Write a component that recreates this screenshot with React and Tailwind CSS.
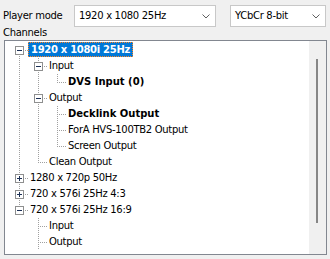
import React from "react";

const LINE = "#a0a0a0";

function Gutter({ up, down, horiz, box }) {
  let v = null;
  if (up && down) v = [0, 16];
  else if (up) v = [0, 9];
  else if (down) v = [8, 16];
  return (
    <svg width="19" height="16" className="block shrink-0" shapeRendering="crispEdges">
      {v && (
        <line x1="9.5" y1={v[0]} x2="9.5" y2={v[1]} stroke={LINE} strokeDasharray="1 1" />
      )}
      {horiz && <line x1="11" y1="8.5" x2="19" y2="8.5" stroke={LINE} strokeDasharray="1 1" />}
      {box && (
        <g>
          <rect x="5.5" y="4.5" width="8" height="8" fill="#ffffff" stroke="#8e8f8f" />
          <line x1="7" y1="8.5" x2="12" y2="8.5" stroke="#1b2f55" />
          {box === "+" && <line x1="9.5" y1="6" x2="9.5" y2="11" stroke="#1b2f55" />}
        </g>
      )}
    </svg>
  );
}

const rows = [
  { anc: [], up: false, down: true, box: "-", text: "1920 x 1080i 25Hz", style: "sel" },
  { anc: [1], up: true, down: true, box: "-", text: "Input" },
  { anc: [1, 1], up: true, down: false, text: "DVS Input (0)", style: "bold" },
  { anc: [1], up: true, down: true, box: "-", text: "Output" },
  { anc: [1, 1], up: true, down: true, text: "Decklink Output", style: "bold" },
  { anc: [1, 1], up: true, down: true, text: "ForA HVS-100TB2 Output" },
  { anc: [1, 1], up: true, down: false, text: "Screen Output" },
  { anc: [1], up: true, down: false, text: "Clean Output" },
  { anc: [], up: true, down: true, box: "+", text: "1280 x 720p 50Hz" },
  { anc: [], up: true, down: true, box: "+", text: "720 x 576i 25Hz 4:3" },
  { anc: [], up: true, down: false, box: "-", text: "720 x 576i 25Hz 16:9" },
  { anc: [0], up: true, down: true, text: "Input" },
  { anc: [0], up: true, down: true, text: "Output" },
];

function Label({ text, style }) {
  if (style === "sel") {
    return (
      <span className="self-start ml-[-1px] h-[15px] px-[2px] leading-[13px] bg-[#0078d7] text-white border border-dotted border-[#ff8728] text-[10px] font-bold tracking-[-0.3px] whitespace-nowrap">
        {text}
      </span>
    );
  }
  if (style === "bold") {
    return (
      <span className="ml-[-1px] px-[2px] leading-[16px] text-[10px] font-bold whitespace-nowrap">
        {text}
      </span>
    );
  }
  return (
    <span className="ml-[-1px] px-[2px] leading-[16px] text-[10px] tracking-[-0.3px] whitespace-nowrap">
      {text}
    </span>
  );
}

function Chevron() {
  return (
    <svg width="8" height="5" className="block shrink-0">
      <path d="M0.5 0.5 L4 4 L7.5 0.5" fill="none" stroke="#606060" strokeWidth="1" />
    </svg>
  );
}

function Combo({ width, text }) {
  return (
    <div
      className={`${width} h-[22px] flex items-center justify-between bg-white border border-[#c8c8c8] pl-[4px] pr-[5px]`}
    >
      <span className="text-[10px] tracking-[-0.3px] whitespace-nowrap leading-[14px]">{text}</span>
      <Chevron />
    </div>
  );
}

export default function App() {
  return (
    <div className="w-[330px] h-[259px] bg-[#f0f0f0] overflow-hidden text-black font-['DejaVu_Sans',sans-serif]">
      <div className="flex items-center pt-[5px] pl-[3px]">
        <span className="w-[71px] text-[10px] tracking-[-0.3px] leading-[14px] whitespace-nowrap">Player mode</span>
        <Combo width="w-[142px]" text="1920 x 1080 25Hz" />
        <div className="ml-[14px]">
          <Combo width="w-[96px]" text="YCbCr 8-bit" />
        </div>
      </div>
      <div className="pl-[3px] h-[13px] text-[10px] tracking-[-0.3px] leading-[11px]">Channels</div>
      <div className="ml-[4px] w-[323px] h-[215px] bg-white border border-[#828790] flex">
        <div className="flex-1 overflow-hidden pt-[1px] pl-[5px]">
          {rows.map((r, i) => (
            <div key={i} className="flex items-center h-[16px]">
              {r.anc.map((a, j) => (
                <Gutter key={j} up={!!a} down={!!a} />
              ))}
              <Gutter up={r.up} down={r.down} horiz box={r.box} />
              <Label text={r.text} style={r.style} />
            </div>
          ))}
        </div>
        <div className="w-[17px] bg-[#f0f0f0] pt-[18px]">
          <div className="ml-[7px] w-[2px] h-[164px] bg-[#868686]" />
        </div>
      </div>
    </div>
  );
}
